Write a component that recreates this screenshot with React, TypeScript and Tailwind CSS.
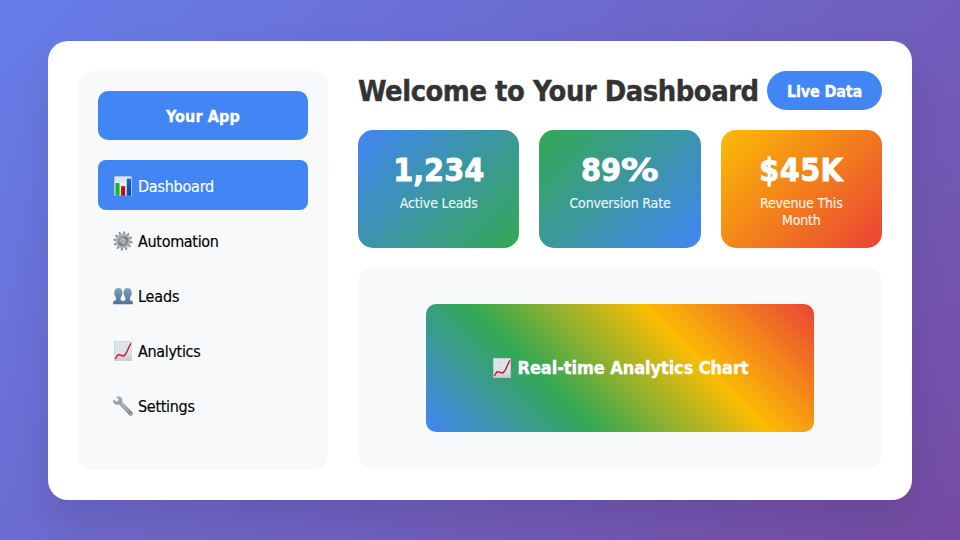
import type { ReactNode } from "react";

function BarChartIcon() {
  return (
    <svg viewBox="0 0 20 20" className="size-5 shrink-0">
      <defs>
        <linearGradient id="bar-sheet" x1="0" y1="0" x2="0" y2="1">
          <stop offset="0" stopColor="#d3e0ef" />
          <stop offset="0.4" stopColor="#eaf0f6" />
          <stop offset="1" stopColor="#d5dce6" />
        </linearGradient>
        <linearGradient id="bar-blue" x1="0" y1="0" x2="0" y2="1">
          <stop offset="0" stopColor="#1767c4" />
          <stop offset="1" stopColor="#08489b" />
        </linearGradient>
      </defs>
      <rect x="1.3" y="0.2" width="17.4" height="19.6" fill="url(#bar-sheet)" stroke="#9fb4ce" strokeWidth="0.5" />
      <path d="M1.5 5H18.5M1.5 10H18.5M1.5 15H18.5" stroke="#c1cddb" strokeWidth="0.4" />
      <rect x="2.5" y="7" width="4" height="12.7" fill="#09be15" />
      <rect x="8.1" y="10.2" width="4" height="9.5" fill="#bd0a1c" />
      <rect x="13.8" y="2.7" width="4.2" height="17" fill="url(#bar-blue)" />
    </svg>
  );
}

function GearIcon() {
  const teeth = [0, 30, 60, 90, 120, 150, 180, 210, 240, 270, 300, 330];
  return (
    <svg viewBox="0 0 20 20" className="size-5 shrink-0">
      <defs>
        <linearGradient id="gear-metal" x1="0" y1="0" x2="1" y2="1">
          <stop offset="0" stopColor="#a3abb1" />
          <stop offset="0.5" stopColor="#737b82" />
          <stop offset="1" stopColor="#8f969b" />
        </linearGradient>
      </defs>
      {teeth.map((a) => (
        <path key={a} d="M8.7 4L9.2 0.3H10.8L11.3 4Z" fill="#8b9298" transform={`rotate(${a + 8} 10 10)`} />
      ))}
      <circle cx="10" cy="10" r="6.5" fill="none" stroke="#adb4b9" strokeWidth="1.6" />
      <circle cx="10" cy="10" r="4.1" fill="none" stroke="url(#gear-metal)" strokeWidth="3.4" />
      <circle cx="10" cy="10" r="2.4" fill="#d0d5d9" />
      <circle cx="10" cy="10" r="1.5" fill="#596168" />
      <circle cx="10.1" cy="9.9" r="0.8" fill="#f0f2f4" />
    </svg>
  );
}

function PeopleIcon() {
  return (
    <svg viewBox="0 0 20 20" className="size-5 shrink-0">
      <defs>
        <linearGradient id="people-blue" x1="0" y1="0" x2="0" y2="1">
          <stop offset="0" stopColor="#85a4bf" />
          <stop offset="0.5" stopColor="#6288aa" />
          <stop offset="1" stopColor="#4d7398" />
        </linearGradient>
      </defs>
      <path
        fill="url(#people-blue)"
        d="M5.4 1.9C8 1.9 9.4 3.7 9.3 6C9.9 8 9 8.9 8.5 10.3C8 11.4 7.4 12 7.4 13.3C7.7 14.6 9.2 14.6 10 15.2C10.8 14.6 12.3 14.6 12.6 13.3C12.6 12 12 11.4 11.5 10.3C11 8.9 10.1 8 10.7 6C10.6 3.7 12 1.9 14.6 1.9C17.2 1.9 18.7 3.7 18.6 6C19.2 7.8 18.4 8.8 17.9 10.1C17.5 11.4 16.8 12 16.8 13.4C17.3 14.6 19.9 14.5 19.9 16.6V18.2H0.1V16.6C0.1 14.5 2.7 14.6 3.2 13.4C3.2 12 2.5 11.4 2.1 10.1C1.6 8.8 0.8 7.8 1.4 6C1.3 3.7 2.8 1.9 5.4 1.9Z"
      />
    </svg>
  );
}

function TrendIcon() {
  return (
    <svg viewBox="0 0 20 20" className="size-5 shrink-0">
      <defs>
        <linearGradient id="trend-sheet" x1="0" y1="0" x2="0" y2="1">
          <stop offset="0" stopColor="#dce6ef" />
          <stop offset="0.6" stopColor="#dfe4e9" />
          <stop offset="1" stopColor="#c6cbd1" />
        </linearGradient>
      </defs>
      <rect x="1.3" y="0.2" width="17.4" height="19.6" fill="url(#trend-sheet)" stroke="#c2c8ce" strokeWidth="0.5" />
      <path d="M1.5 5H18.5M1.5 10H18.5M1.5 15H18.5M7 0.5V19.5M13 0.5V19.5" stroke="#cdd5dd" strokeWidth="0.4" />
      <path d="M2.3 18L5 13.6L10.8 15L13.2 12.2L17.8 2.2" fill="none" stroke="#c9152a" strokeWidth="1.35" strokeLinejoin="round" />
    </svg>
  );
}

function WrenchIcon() {
  return (
    <svg viewBox="0 0 20 20" className="size-5 shrink-0">
      <defs>
        <linearGradient id="wrench-metal" x1="0" y1="0" x2="1" y2="1">
          <stop offset="0" stopColor="#9eabb2" />
          <stop offset="0.55" stopColor="#9a9fa4" />
          <stop offset="1" stopColor="#766a6c" />
        </linearGradient>
      </defs>
      <path
        fill="url(#wrench-metal)"
        stroke="#7f878c"
        strokeWidth="0.4"
        d="M4.3 0.5L7.4 1.2C8.8 2.1 9.3 3.8 8.8 5.9L18.9 16.1C19.8 17.2 19.7 18.4 19 19.1C18.2 19.8 17 19.7 16.1 18.8L6.3 8.2C4.3 8.8 2.1 8.4 1 6.9L0.3 4.5L1.2 4L3.2 5.8L5.3 5.3L6.1 3.4L4 1.2Z"
      />
      <path d="M8.2 7.4L16.2 16" stroke="#d9dde0" strokeWidth="0.9" />
      <circle cx="17.6" cy="17.7" r="0.75" fill="#f4f4f5" />
    </svg>
  );
}

function NavItem({ icon, active, children }: { icon: ReactNode; active?: boolean; children: ReactNode }) {
  return (
    <li className={active ? "flex h-[50px] items-center gap-[5px] rounded-lg bg-[#4285f4] px-[15px] pt-0.5 text-white" : "flex h-[50px] items-center gap-[5px] rounded-lg px-[15px] pt-0.5 text-black"}>
      {icon}
      <span className="pt-0.5 [-webkit-text-stroke:0.15px]">{children}</span>
    </li>
  );
}

function StatCard({ value, label, className }: { value: ReactNode; label: string; className: string }) {
  return (
    <div className={`flex flex-col items-center rounded-[15px] px-5 pt-[21px] pb-[19px] text-center text-white ${className}`}>
      <div className="mb-[5px] text-[32px] leading-[39px] font-bold [-webkit-text-stroke:0.8px]">{value}</div>
      <div className="h-[34px] text-sm leading-[17px] tracking-[-0.16px] opacity-90 [-webkit-text-stroke:0.15px]">{label}</div>
    </div>
  );
}

export default function App() {
  return (
    <div className="flex h-screen w-screen items-center justify-center overflow-hidden bg-[linear-gradient(135deg,#667eea_0%,#764ba2_100%)] font-['DejaVu_Sans_Condensed','DejaVu_Sans',sans-serif] text-base [font-stretch:condensed]">
      <main className="flex h-[85%] w-[90%] gap-[30px] rounded-[20px] bg-white p-[30px] shadow-[0_20px_40px_rgba(0,0,0,0.1)]">
        <aside className="w-[250px] shrink-0 rounded-[15px] bg-[#f8f9fa] p-5">
          <div className="mb-5 rounded-[10px] bg-[#4285f4] px-[15px] pt-4 pb-3.5 text-center leading-[19px] font-bold tracking-[0.13px] text-white [-webkit-text-stroke:0.35px]">
            Your App
          </div>
          <ul className="flex flex-col gap-[5px] leading-5">
            <NavItem icon={<BarChartIcon />} active>
              <span className="tracking-[-0.23px]">Dashboard</span>
            </NavItem>
            <NavItem icon={<GearIcon />}>
              <span className="tracking-[-0.32px]">Automation</span>
            </NavItem>
            <NavItem icon={<PeopleIcon />}>
              <span className="tracking-[-0.15px]">Leads</span>
            </NavItem>
            <NavItem icon={<TrendIcon />}>
              <span className="tracking-[-0.34px]">Analytics</span>
            </NavItem>
            <NavItem icon={<WrenchIcon />}>
              <span className="tracking-[-0.3px]">Settings</span>
            </NavItem>
          </ul>
        </aside>
        <section className="flex min-w-0 flex-1 flex-col gap-5">
          <header className="flex items-center justify-between">
            <h1 className="pt-px text-[28.8px] leading-[34px] font-bold tracking-[-0.46px] whitespace-nowrap text-[#333] [-webkit-text-stroke:0.4px]">Welcome to Your Dashboard</h1>
            <div className="rounded-[20px] bg-[#4285f4] px-5 pt-[11px] pb-[9px] leading-[19px] font-bold tracking-[-0.17px] whitespace-nowrap text-white [-webkit-text-stroke:0.35px]">
              Live Data
            </div>
          </header>
          <div className="grid grid-cols-3 gap-5">
            <StatCard className="bg-[linear-gradient(135deg,#4285f4,#34a853)]" value="1,234" label="Active Leads" />
            <StatCard
              className="bg-[linear-gradient(135deg,#34a853,#4285f4)]"
              value={
                <span className="flex">
                  <span>89</span>
                  <span className="w-[38px] origin-left scale-x-[1.3] text-left">%</span>
                </span>
              }
              label="Conversion Rate"
            />
            <StatCard className="bg-[linear-gradient(135deg,#fbbc04,#ea4335)]" value={<span className="tracking-[0.4px]">$45K</span>} label="Revenue This Month" />
          </div>
          <div className="flex h-[200px] items-center justify-center rounded-[15px] bg-[#f8f9fa] p-5">
            <div className="flex h-4/5 w-4/5 items-center justify-center gap-[5px] rounded-[10px] bg-[linear-gradient(45deg,#4285f4,#34a853,#fbbc04,#ea4335)] pt-px pl-px text-lg font-bold tracking-[-0.07px] text-white">
              <TrendIcon />
              <span className="[-webkit-text-stroke:0.35px]">Real-time Analytics Chart</span>
            </div>
          </div>
        </section>
      </main>
    </div>
  );
}
